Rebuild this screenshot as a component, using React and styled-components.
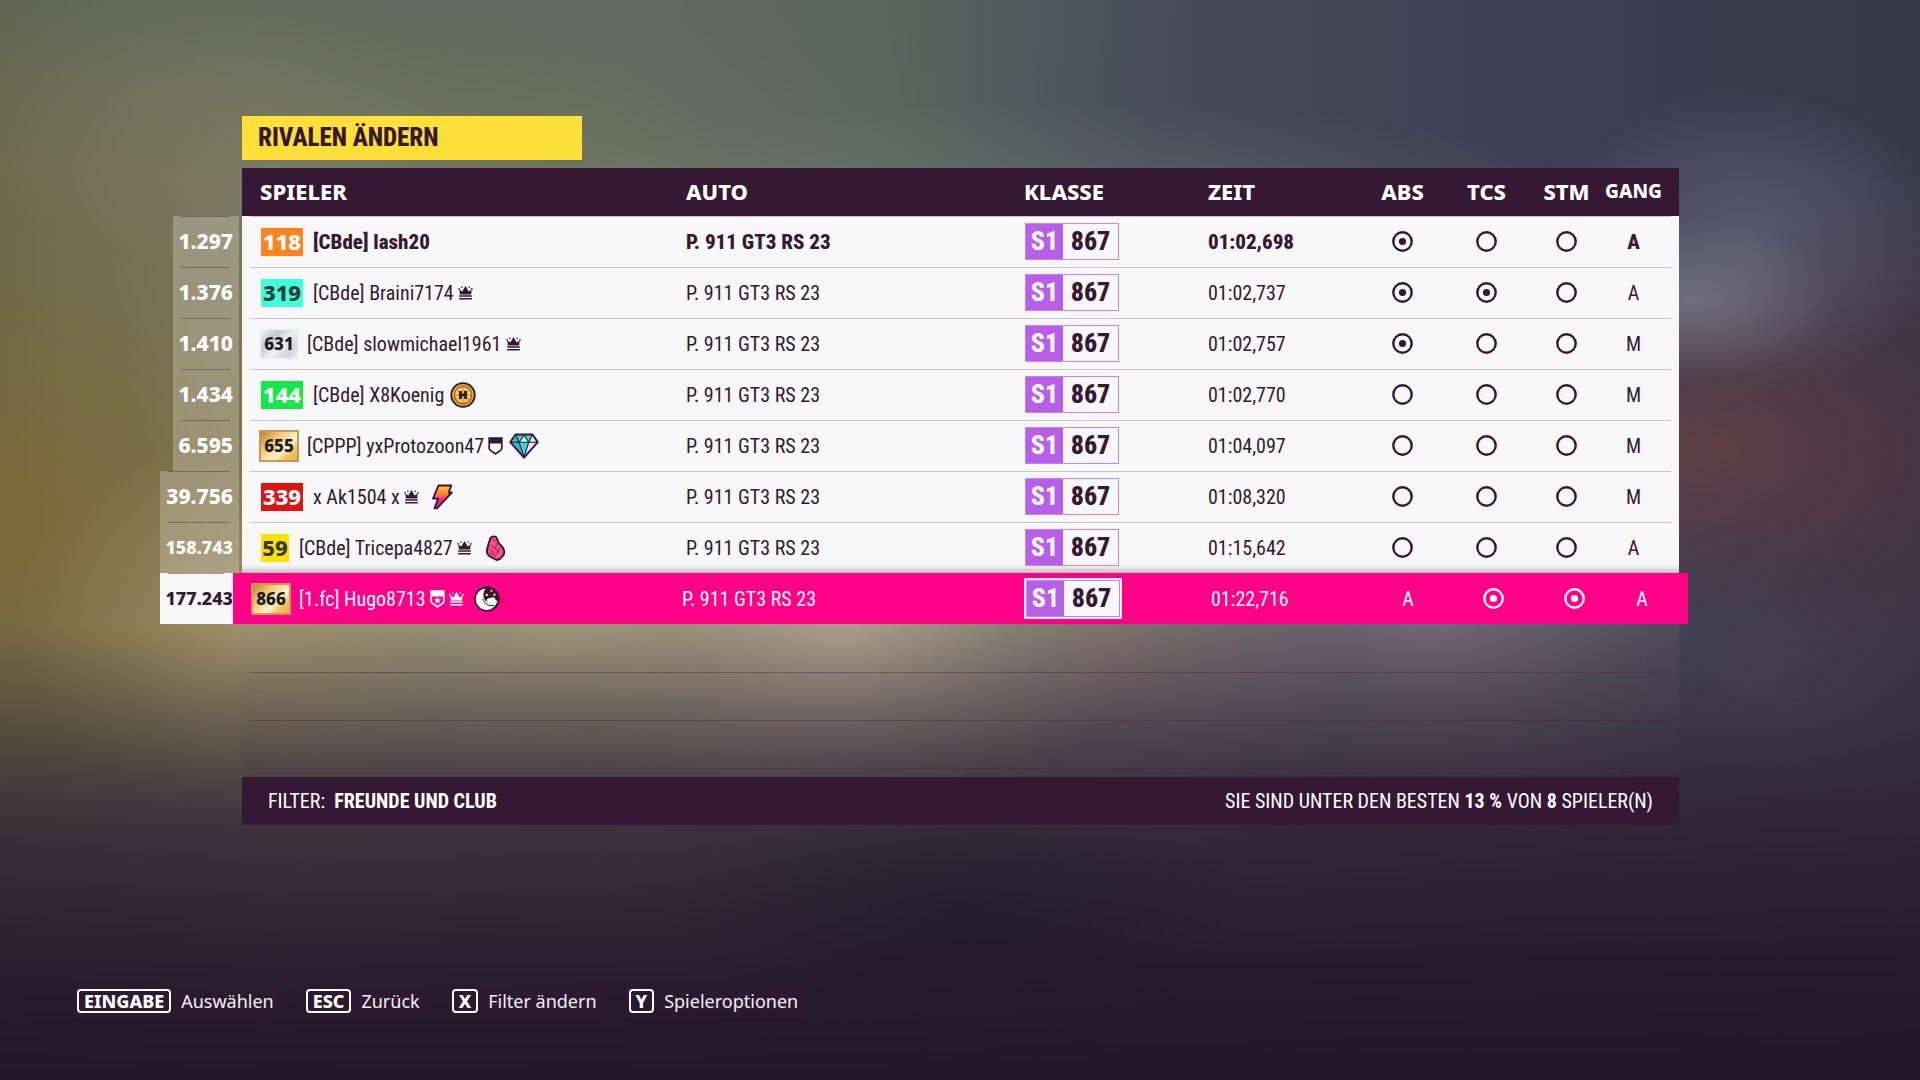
import React from "react";
import styled, { createGlobalStyle, css } from "styled-components";

const wide = `"Noto Sans", "Open Sans", sans-serif`;
const narrow = `"Roboto Condensed", "Liberation Sans Narrow", "Noto Sans", sans-serif`;
const ink = "#341834";
const paper = "#f7f7f7";
const pink = "#ff0087";

const Global = createGlobalStyle`
  * { box-sizing: border-box; }
  body { margin: 0; background: #20172a; }
`;

const Page = styled.main`
  min-height: 100vh;
  display: flex;
  flex-direction: column;
  justify-content: space-between;
  gap: 48px;
  padding: 116px 0 62px;
  color: #fff;
  font-family: ${narrow};
  background:
    radial-gradient(ellipse 300px 110px at 960px 910px, rgba(28, 24, 40, 0.5), transparent 100%),
    linear-gradient(180deg, rgba(44, 34, 50, 0) 58%, rgba(46, 34, 50, 0.38) 67%, rgba(44, 32, 50, 0.8) 77%, rgba(36, 25, 45, 0.94) 90%, rgba(32, 21, 40, 0.98) 100%),
    radial-gradient(ellipse 150px 80px at 1690px 300px, rgba(150, 150, 158, 0.45), transparent 100%),
    radial-gradient(ellipse 210px 150px at 1750px 240px, rgba(120, 118, 140, 0.5), rgba(110, 105, 128, 0.3) 60%, transparent 100%),
    radial-gradient(ellipse 260px 170px at 1700px 450px, rgba(105, 66, 70, 0.75), transparent 100%),
    radial-gradient(ellipse 280px 260px at 1880px 460px, rgba(72, 50, 62, 0.85), transparent 100%),
    radial-gradient(ellipse 160px 120px at 1760px 680px, rgba(80, 74, 98, 0.6), transparent 100%),
    radial-gradient(ellipse 280px 210px at 840px 640px, rgba(178, 160, 142, 0.95), rgba(165, 147, 132, 0.55) 55%, transparent 100%),
    radial-gradient(ellipse 440px 220px at 560px 640px, rgba(172, 156, 124, 0.8), transparent 100%),
    radial-gradient(ellipse 220px 190px at 240px 630px, rgba(172, 152, 108, 0.65), transparent 100%),
    radial-gradient(ellipse 240px 240px at 1120px 640px, rgba(142, 116, 114, 0.75), transparent 100%),
    radial-gradient(ellipse 280px 240px at 1430px 620px, rgba(128, 112, 128, 0.7), transparent 100%),
    radial-gradient(ellipse 440px 320px at 0 520px, rgba(132, 104, 48, 0.7), transparent 100%),
    radial-gradient(ellipse 260px 150px at 180px 110px, rgba(128, 126, 104, 0.35), transparent 100%),
    radial-gradient(ellipse 620px 160px at 1060px 260px, rgba(134, 144, 128, 0.4), transparent 100%),
    radial-gradient(ellipse 900px 180px at 300px 0, rgba(80, 94, 88, 0.6), transparent 100%),
    linear-gradient(90deg, #6c6a4c 0%, #7a7a60 14%, #6c7361 32%, #5a685f 46%, #454e5a 60%, #3f4054 78%, #38374a 100%);
`;

const Board = styled.section`
  padding: 0 241px 0 242px;
`;

const Title = styled.h1`
  width: 340px;
  height: 44px;
  margin: 0 0 8px;
  padding-left: 16px;
  background: #ffdf3a;
  color: ${ink};
  font-size: 25px;
  line-height: 44px;
  font-weight: 800;
`;

const tracks = (...sizes) => sizes.map((n) => `minmax(0, ${n}fr)`).join(" ");

const Table = styled.table`
  display: block;
  margin-left: -82px;

  thead, tbody { display: block; }
`;

const HeadRow = styled.tr`
  display: grid;
  grid-template-columns: 82px ${tracks(444, 338, 184, 152, 85, 83, 77, 74)};
  height: 48px;
  background: linear-gradient(${ink}, ${ink}) 82px 0 no-repeat;
`;

const HeadCell = styled.th`
  padding: 0 ${(p) => (p.$last ? "17px" : "0")} 0 ${(p) => (p.$first ? "18px" : "0")};
  font-family: ${wide};
  font-size: ${(p) => (p.$last ? "19px" : "22px")};
  line-height: 46px;
  font-weight: 800;
  text-align: ${(p) => (p.$center ? "center" : "left")};
`;

const Row = styled.tr`
  display: grid;
  grid-template-columns: 82px ${tracks(444, 338, 184, 152, 85, 83, 77, 74)};
  align-items: center;
  height: 51px;
  color: ${ink};
  font-size: ${(p) => (p.$leader ? "21px" : "20px")};
  font-weight: ${(p) => (p.$leader ? 800 : 400)};
  background:
    linear-gradient(#c9c3c9, #c9c3c9) 90px 0 / calc(100% - 98px) 1px no-repeat,
    ${(p) => p.$above && `linear-gradient(rgba(0, 0, 0, 0), rgba(0, 0, 0, 0.22)) 82px 100% / 100% 8px no-repeat,`}
    linear-gradient(${paper}, ${paper}) 82px 0 no-repeat;

  ${(p) =>
    p.$selected &&
    css`
      grid-template-columns: 73px ${tracks(449, 342, 187, 154, 86, 84, 78, 75)};
      margin-right: -9px;
      color: #fff;
      background: ${pink};
    `}
`;

const Rank = styled.th`
  height: 51px;
  margin: 0 ${(p) => (p.$selected ? "0" : "3px")} 0 ${(p) => (p.$long ? "0" : "13px")};
  padding: 0 ${(p) => (p.$selected ? "0" : "6px")} 0 0;
  font-family: ${wide};
  font-size: ${(p) => (p.$small ? "18px" : "21px")};
  line-height: 50px;
  font-weight: 800;
  text-align: right;
  color: ${(p) => (p.$selected ? ink : "#fff")};
  background:
    linear-gradient(rgba(80, 60, 60, 0.5), rgba(80, 60, 60, 0.5)) 8px 0 / calc(100% - 17px) 1px no-repeat,
    ${(p) => (p.$selected ? `linear-gradient(${paper}, ${paper})` : "linear-gradient(rgba(215, 205, 190, 0.36), rgba(215, 205, 190, 0.36))")};
`;

const Cell = styled.td`
  display: flex;
  align-items: center;
  justify-content: ${(p) => (p.$center ? "center" : "flex-start")};
  padding: 0 ${(p) => (p.$last ? "17px" : "0")} 0 0;
  line-height: 24px;
  white-space: nowrap;
`;

const Player = styled.td`
  display: flex;
  align-items: center;
  gap: 10px;
  padding: 0 0 0 ${(p) => (p.$selected ? "20px" : "19px")};
  white-space: nowrap;
`;

const Name = styled.span`
  display: flex;
  align-items: center;
  gap: 4px;
`;

const metal = {
  silver: "linear-gradient(135deg, #f2f3f5, #c5c9d2 30%, #eceef1 55%, #cfd3da 80%, #eceef0)",
  gold: "linear-gradient(135deg, #b98532, #f0c468 30%, #fff3cf 62%, #f2c35f 80%, #e7b04c)",
};

const Level = styled.span`
  width: ${(p) => (p.$metal ? "36px" : p.$short ? "28px" : "42px")};
  height: 28px;
  text-align: center;
  font-family: ${wide};
  font-size: ${(p) => (p.$metal ? "17px" : "22px")};
  line-height: 27px;
  font-weight: 800;
  color: ${(p) => p.$ink || "#fff"};
  background: ${(p) => (p.$metal ? metal[p.$metal] : p.$color)};
  ${(p) => p.$metal === "gold" && "box-shadow: 0 0 0 2px #c4995a;"}
  ${(p) => p.$metal === "silver" && "box-shadow: 0 0 2px 1px #ececee;"}
`;

const ClassBadge = styled.span`
  display: grid;
  grid-template-columns: 37px 1fr;
  width: 94px;
  height: 37px;
  margin-left: ${(p) => (p.$selected ? "2px" : "1px")};
  border: 1px solid #c983ee;
  background: ${paper};
  color: ${ink};
  font-size: 26px;
  line-height: 35px;
  font-weight: 800;
  text-align: center;
  ${(p) => p.$selected && `box-shadow: 0 0 0 2px ${paper};`}
`;

const ClassLetter = styled.span`
  background: #b75fe8;
  color: ${paper};
`;

const Empty = styled.div`
  height: 153px;
  background: linear-gradient(rgba(160, 145, 125, 0.12), rgba(60, 50, 60, 0.2));
`;

const EmptyLine = styled.div`
  height: 49px;
  margin: 0 8px -1px;
  border-bottom: 1px solid rgba(66, 36, 66, 0.4);
`;

const Footer = styled.footer`
  display: flex;
  justify-content: space-between;
  padding: 0 26px;
  background: ${ink};
  font-size: 20px;
  line-height: 48px;

  b { font-weight: 700; }
`;

const Hints = styled.nav`
  display: flex;
  flex-wrap: wrap;
  gap: 20px;
  padding: 0 72px;
`;

const Hint = styled.button`
  display: flex;
  align-items: center;
  gap: 10px;
  height: 34px;
  padding: 0 7px 0 5px;
  border: 0;
  border-radius: 5px;
  background: rgba(52, 24, 52, 0.5);
  color: #f4f0f4;
  font-family: ${wide};
  font-size: 18px;
  line-height: 24px;
`;

const Key = styled.kbd`
  min-width: 24px;
  height: 24px;
  padding: 0 5px;
  border: 2px solid #fff;
  border-radius: 4px;
  color: #fff;
  font-family: ${wide};
  font-size: 18px;
  line-height: 20px;
  font-weight: 800;
`;

const Ring = ({ on }) => (
  <svg width="21" height="21" viewBox="0 0 21 21" role="img" aria-label={on ? "An" : "Aus"}>
    <circle cx="10.5" cy="10.5" r="9.2" fill="none" stroke="currentColor" strokeWidth="2.4" />
    {on && <circle cx="10.5" cy="10.5" r="3.6" fill="currentColor" />}
  </svg>
);

const Crown = () => (
  <svg width="15" height="15" viewBox="0 0 15 15" fill="currentColor">
    <path d="M1.900 9.400 1.300 4.400l3 2L7.500 1l3.200 5.400 3-2-.6 5z" />
    <circle cx="1.100" cy="3.800" r="0.900" /><circle cx="13.900" cy="3.800" r="0.900" />
    <circle cx="3.800" cy="2.200" r="0.800" /><circle cx="11.200" cy="2.200" r="0.800" />
    <path d="M1.200 10.200h12.600v1.600H1.200zM1.200 12.900h12.600v1.600H1.200z" />
  </svg>
);

const Shield = ({ star }) => (
  <svg width="15" height="18" viewBox="0 0 15 18">
    <path d="M1.200 1.200h12.600v10.400c0 2-4.400 3.600-6.300 5.200-1.900-1.600-6.300-3.200-6.300-5.200z" fill="none" stroke="currentColor" strokeWidth="1.700" />
    <path d="M1 1h13v5.500H1z" fill="currentColor" />
    {star && <path d="M7.500 7l1 2.300 2.500.2-1.900 1.600.6 2.500-2.200-1.300-2.200 1.300.6-2.500L4 9.500l2.500-.2z" fill="currentColor" />}
  </svg>
);

const Coin = () => (
  <svg width="26" height="26" viewBox="0 0 26 26">
    <circle cx="13" cy="13" r="11.800" fill="#dba52f" stroke={ink} strokeWidth="1.800" />
    <circle cx="13" cy="13" r="8.600" fill="#e9c763" stroke="#8d6424" strokeWidth="1.200" />
    <path d="M13 5v16M5 13h16M6.500 7.500l13 11M19.500 7.500l-13 11" stroke="#b98d3c" strokeWidth="0.900" />
    <path d="M9 9h2.900v2.700h2.200V9H17v8h-2.900v-2.700h-2.200V17H9z" fill={ink} />
  </svg>
);

const Diamond = () => (
  <svg width="30" height="26" viewBox="0 0 30 26" strokeLinejoin="round">
    <path d="M6.500 1.500h17L28.700 9 15 24.600 1.300 9z" fill="#43d3d6" stroke={ink} strokeWidth="2" />
    <path d="M2.600 9.200 6.800 3 10 9.200 15 23z" fill="#2bb9c6" />
    <path d="M15 23l4.800-13.800h7.500zM19.800 9 23 2.800 27 9z" fill="#dceef2" />
    <path d="M10 9l5-6.200L19.800 9z" fill="#c6fbf5" />
    <path d="M1.500 9.200h27M6.800 2 10 9.200 15 24l4.800-14.800L23.200 2M10 9.200l5-7 4.800 7" fill="none" stroke={ink} strokeWidth="1.100" />
  </svg>
);

const Bolt = () => (
  <svg width="26" height="26" viewBox="0 0 26 26">
    <defs>
      <linearGradient id="bolt" x1="0" y1="0" x2="0" y2="1">
        <stop offset="0" stopColor="#ffc61a" /><stop offset="0.4" stopColor="#ff7a3c" />
        <stop offset="0.62" stopColor="#fb1f9c" /><stop offset="1" stopColor="#e416c4" />
      </linearGradient>
    </defs>
    <path d="M9.500 1.500h12.700l-2.400 7h3L8 24.300 5.500 24.400l3.700-9.800H4z" fill="url(#bolt)" stroke={ink} strokeWidth="1.900" strokeLinejoin="round" />
  </svg>
);

const Hand = () => (
  <svg width="26" height="26" viewBox="0 0 26 26" strokeLinejoin="round" strokeLinecap="round">
    <path d="M8.500 2.800c1.600-2 5-1.900 6.300.2l1.800 5 4.200 4.600c1.500 2.200 1.800 5 .8 7.200L18 24l-3.400 1-6.400-3.400c-2.400-1.500-4-4.400-3-7.700L6.500 9z" fill="#ff4f91" stroke={ink} strokeWidth="1.900" />
    <path d="M9 10.500l4.500 3.500M7.500 14l5.500 4M14.500 8.500l-1 5 3.500 3.500M8.500 18l5 3M17.500 13.500l-3 5.500M10.500 4.500l3 1.500" fill="none" stroke="#8a1c52" strokeWidth="1" />
  </svg>
);

const Moon = () => (
  <svg width="26" height="26" viewBox="0 0 26 26">
    <circle cx="13" cy="13" r="12.800" fill={ink} />
    <path d="M11.500 2.400a10.800 10.800 0 1 0 11.600 13.200c-1 1-2.200 1.700-3.600 2-4.600 1.200-9.300-1.900-10-6.800-.4-3.100.3-6.200 2-8.400z" fill="#fff" />
    <path d="M12.300 15.300c.3-2.600 2.500-3.900 4.500-3.200 1.800-1.600 4.600-.4 4.800 1.900l2 1.200c-2.600 4.200-8.200 4.300-11.300.1z" fill="#fff" />
    <path d="M8.500 13c2 5 6 7.500 11.500 6.500" fill="none" stroke={ink} strokeWidth="1" />
    <circle cx="17.500" cy="4.800" r="1.100" fill="#ffe23a" /><circle cx="12.800" cy="9" r="1.200" fill="#ffe23a" /><circle cx="20.500" cy="8.800" r="1.200" fill="#ffe23a" />
  </svg>
);

const Emblem = styled.span`
  display: flex;
  margin-left: ${(p) => (p.$near ? "2px" : "6px")};
`;

const rows = [
  { rank: "1.297", level: "118", color: "#ff8420", name: "[CBde] lash20", time: "01:02,698", aids: [1, 0, 0], gear: "A", leader: true },
  { rank: "1.376", level: "319", color: "#3fffda", dark: "#2c3a3a", name: "[CBde] Braini7174", marks: [Crown], time: "01:02,737", aids: [1, 1, 0], gear: "A" },
  { rank: "1.410", level: "631", metal: "silver", dark: "#1c1c1c", name: "[CBde] slowmichael1961", marks: [Crown], time: "01:02,757", aids: [1, 0, 0], gear: "M" },
  { rank: "1.434", level: "144", color: "#14e84a", name: "[CBde] X8Koenig", emblem: Coin, near: true, time: "01:02,770", aids: [0, 0, 0], gear: "M" },
  { rank: "6.595", level: "655", metal: "gold", dark: "#1c1c1c", name: "[CPPP] yxProtozoon47", marks: [Shield], emblem: Diamond, near: true, time: "01:04,097", aids: [0, 0, 0], gear: "M" },
  { rank: "39.756", level: "339", color: "#dd1414", name: "x Ak1504 x", marks: [Crown], emblem: Bolt, time: "01:08,320", aids: [0, 0, 0], gear: "M" },
  { rank: "158.743", level: "59", color: "#ffe100", dark: "#333a33", name: "[CBde] Tricepa4827", marks: [Crown], emblem: Hand, time: "01:15,642", aids: [0, 0, 0], gear: "A", above: true },
  { rank: "177.243", level: "866", metal: "gold", dark: "#1c1c1c", name: "[1.fc] Hugo8713", marks: [Shield, Crown], emblem: Moon, time: "01:22,716", aids: ["A", 1, 1], gear: "A", selected: true },
];

const hints = [
  ["EINGABE", "Auswählen"],
  ["ESC", "Zurück"],
  ["X", "Filter ändern"],
  ["Y", "Spieleroptionen"],
];

export default function App() {
  return (
    <Page>
      <Global />
      <Board>
        <Title>RIVALEN ÄNDERN</Title>
        <Table>
          <thead>
            <HeadRow>
              <td />
              <HeadCell $first>SPIELER</HeadCell>
              <HeadCell>AUTO</HeadCell>
              <HeadCell>KLASSE</HeadCell>
              <HeadCell>ZEIT</HeadCell>
              <HeadCell $center>ABS</HeadCell>
              <HeadCell $center>TCS</HeadCell>
              <HeadCell $center>STM</HeadCell>
              <HeadCell $center $last>GANG</HeadCell>
            </HeadRow>
          </thead>
          <tbody>
            {rows.map((r) => (
              <Row key={r.rank} $leader={r.leader} $selected={r.selected} $above={r.above}>
                <Rank scope="row" $selected={r.selected} $long={r.rank.length > 5} $small={r.rank.length > 6}>{r.rank}</Rank>
                <Player $selected={r.selected}>
                  <Level $metal={r.metal} $color={r.color} $ink={r.dark} $short={r.level.length < 3}>{r.level}</Level>
                  <Name>
                    {r.name}
                    {r.marks && r.marks.map((Mark, i) => <Mark key={i} star={r.selected} />)}
                    {r.emblem && <Emblem $near={r.near}><r.emblem /></Emblem>}
                  </Name>
                </Player>
                <Cell>P. 911 GT3 RS 23</Cell>
                <Cell>
                  <ClassBadge $selected={r.selected}><ClassLetter>S1</ClassLetter>867</ClassBadge>
                </Cell>
                <Cell>{r.time}</Cell>
                {r.aids.map((aid, i) => (
                  <Cell key={i} $center>{aid === "A" ? "A" : <Ring on={!!aid} />}</Cell>
                ))}
                <Cell $center $last>{r.gear}</Cell>
              </Row>
            ))}
          </tbody>
        </Table>
        <Empty>
          <EmptyLine /><EmptyLine /><EmptyLine />
        </Empty>
        <Footer>
          <span>FILTER: &nbsp;<b>FREUNDE UND CLUB</b></span>
          <span>SIE SIND UNTER DEN BESTEN <b>13 %</b> VON <b>8</b> SPIELER(N)</span>
        </Footer>
      </Board>
      <Hints>
        {hints.map(([key, label]) => (
          <Hint key={key} type="button"><Key>{key}</Key>{label}</Hint>
        ))}
      </Hints>
    </Page>
  );
}
